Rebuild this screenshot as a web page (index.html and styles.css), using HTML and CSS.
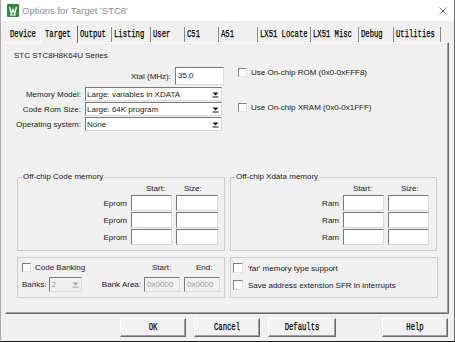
FILE: index.html
```html
<!DOCTYPE html>
<html lang="en">
<head>
    <meta charset="UTF-8">
    <title>Options for Target 'STC8'</title>
    <link rel="stylesheet" href="styles.css">
</head>
<body>
    <div class="window">
        <div class="titlebar">
            <svg class="app-icon" viewBox="0 0 12 13">
                <rect width="12" height="13" rx="1" fill="#2f8a3a"/>
                <path d="M2.5 3 L4.3 9.5 L6 5.5 L7.7 9.5 L9.5 3" fill="none" stroke="#fff" stroke-width="1.4"/>
                <path d="M3 11 H9" stroke="#fff" stroke-width="1"/>
            </svg>
            <span class="title">Options for Target 'STC8'</span>
            <svg class="close" viewBox="0 0 8 8">
                <path d="M0.5 0.5 L7.5 7.5 M7.5 0.5 L0.5 7.5" stroke="#7a7a7a" stroke-width="1"/>
            </svg>
        </div>

        <div class="tabs">
            <div class="tab first"><span>Device</span></div>
            <div class="tab active"><span>Target</span></div>
            <div class="tab"><span>Output</span></div>
            <div class="tab"><span>Listing</span></div>
            <div class="tab"><span>User</span></div>
            <div class="tab"><span>C51</span></div>
            <div class="tab"><span>A51</span></div>
            <div class="tab"><span>LX51 Locate</span></div>
            <div class="tab"><span>LX51 Misc</span></div>
            <div class="tab"><span>Debug</span></div>
            <div class="tab"><span>Utilities</span></div>
        </div>

        <div class="panel">
            <div class="series">STC STC8H8K64U Series</div>

            <div class="top">
                <div class="settings">
                    <div class="xtal-row">
                        <span>Xtal (MHz):</span>
                        <div class="edit xtal">35.0</div>
                    </div>
                    <div class="combos">
                        <span class="label">Memory Model:</span>
                        <div class="combo"><span class="combo-text">Large: variables in XDATA</span><span class="drop"><svg viewBox="0 0 7 7"><path d="M0.5 1.5 H6.5 L3.5 4.5 Z" fill="#111"/><path d="M0.5 6 H6.5" stroke="#111"/></svg></span></div>
                        <span class="label">Code Rom Size:</span>
                        <div class="combo"><span class="combo-text">Large: 64K program</span><span class="drop"><svg viewBox="0 0 7 7"><path d="M0.5 1.5 H6.5 L3.5 4.5 Z" fill="#111"/><path d="M0.5 6 H6.5" stroke="#111"/></svg></span></div>
                        <span class="label">Operating system:</span>
                        <div class="combo"><span class="combo-text">None</span><span class="drop"><svg viewBox="0 0 7 7"><path d="M0.5 1.5 H6.5 L3.5 4.5 Z" fill="#111"/><path d="M0.5 6 H6.5" stroke="#111"/></svg></span></div>
                    </div>
                </div>
                <div class="onchip">
                    <div class="check"><span class="box"></span>Use On-chip ROM (0x0-0xFFF8)</div>
                    <div class="check"><span class="box"></span>Use On-chip XRAM (0x0-0x1FFF)</div>
                </div>
            </div>

            <div class="groups">
                <div class="group code">
                    <div class="group-title">Off-chip Code memory</div>
                    <div class="mem">
                        <span></span>
                        <span class="head code-start">Start:</span>
                        <span class="head code-size">Size:</span>
                        <span class="label">Eprom</span><div class="edit"></div><div class="edit"></div>
                        <span class="label">Eprom</span><div class="edit"></div><div class="edit"></div>
                        <span class="label">Eprom</span><div class="edit"></div><div class="edit"></div>
                    </div>
                </div>
                <div class="group xdata">
                    <div class="group-title">Off-chip Xdata memory</div>
                    <div class="mem">
                        <span></span>
                        <span class="head xdata-start">Start:</span>
                        <span class="head xdata-size">Size:</span>
                        <span class="label">Ram</span><div class="edit"></div><div class="edit"></div>
                        <span class="label">Ram</span><div class="edit"></div><div class="edit"></div>
                        <span class="label">Ram</span><div class="edit"></div><div class="edit"></div>
                    </div>
                </div>
            </div>

            <div class="groups lower">
                <div class="group banking">
                    <div class="check span2"><span class="box"></span>Code Banking</div>
                    <span class="bank-start">Start:</span>
                    <span class="bank-end">End:</span>
                    <div class="banks">
                        <span>Banks:</span>
                        <div class="combo disabled small"><span class="combo-text">2</span><span class="drop"><svg viewBox="0 0 7 7"><path d="M0.5 1.5 H6.5 L3.5 4.5 Z" fill="#a0a0a0"/><path d="M0.5 6 H6.5" stroke="#a0a0a0"/></svg></span></div>
                    </div>
                    <span class="bank-area">Bank Area:</span>
                    <div class="edit disabled">0x0000</div>
                    <div class="edit disabled">0x0000</div>
                </div>
                <div class="group far">
                    <div class="check"><span class="box"></span>'far' memory type support</div>
                    <div class="check"><span class="box"></span>Save address extension SFR in interrupts</div>
                </div>
            </div>
        </div>

        <div class="buttons">
            <button class="btn"><span>OK</span></button>
            <button class="btn"><span>Cancel</span></button>
            <button class="btn wide"><span>Defaults</span></button>
            <button class="btn help"><span>Help</span></button>
        </div>
    </div>
</body>
</html>
```

FILE: styles.css
```css
* {
    box-sizing: border-box;
}

body {
    margin: 0;
    background: #ffffff;
    font-family: "Liberation Sans", Arial, sans-serif;
    font-size: 8px;
    color: #1a1a1a;
}

.window {
    width: 455px;
    height: 342px;
    background: #f0f0f0;
    border-left: 1px solid #a9a9a9;
    border-right: 1px solid #6b6b6b;
    border-bottom: 1px solid #1b1b1b;
    display: flex;
    flex-direction: column;
}

/* title bar */
.titlebar {
    height: 21px;
    flex: none;
    background: #ffffff;
    display: flex;
    align-items: center;
    gap: 3px;
    padding: 0 7px 0 6px;
}

.app-icon {
    width: 12px;
    height: 13px;
}

.title {
    flex: 1;
    font-size: 9.5px;
    color: #8c8c8c;
}

.close {
    width: 8px;
    height: 8px;
}

/* tabs */
.tabs {
    height: 21px;
    flex: none;
    display: grid;
    grid-template-columns: 35px 38px 34px 39px 34px 34px 39px 53px 48px 35px 47px;
    align-items: end;
    padding-left: 4px;
}

.tab {
    height: 15px;
    border-right: 1px solid #8a8a8a;
    padding-left: 2px;
    font-family: "Liberation Mono", monospace;
    font-size: 10px;
    line-height: 15px;
    color: #000000;
    white-space: nowrap;
}

.tab span,
.btn span {
    display: inline-block;
    transform: scaleX(0.72);
    transform-origin: 0 50%;
    -webkit-text-stroke: 0.25px #000;
}

.tab.first {
    border-right: none;
    padding-left: 5px;
}

.tab.active {
    height: 18px;
    margin-bottom: -1px;
    background: #f0f0f0;
    border-top: 1px solid #ffffff;
    border-left: 1px solid #ffffff;
    border-right: 1px solid #6b6b6b;
    padding-left: 4px;
    line-height: 17px;
    position: relative;
    z-index: 1;
}

/* tab page */
.panel {
    width: 444px;
    height: 272px;
    flex: none;
    margin-left: 4px;
    border: 1px solid;
    border-color: #ffffff #6b6b6b #6b6b6b #ffffff;
    box-shadow: inset -1px -1px #a0a0a0;
    padding: 8px 0 0 8px;
}

.series {
    line-height: 10px;
}

.top {
    display: flex;
    gap: 14px;
    margin-top: 6px;
}

.settings {
    width: 210px;
}

.xtal-row {
    height: 18px;
    display: flex;
    justify-content: flex-end;
    align-items: center;
    gap: 4px;
}

.edit {
    background: #ffffff;
    border: 1px solid;
    border-color: #7a7a7a #dadada #dadada #7a7a7a;
    padding-left: 2px;
    white-space: nowrap;
}

.xtal {
    width: 49px;
    height: 18px;
    line-height: 16px;
}

.combos {
    display: grid;
    grid-template-columns: 67px 137px;
    grid-auto-rows: 14px;
    column-gap: 4px;
    row-gap: 1px;
    align-items: center;
    margin-top: 2px;
}

.label {
    text-align: right;
    white-space: nowrap;
}

.combo {
    height: 14px;
    display: flex;
    align-items: center;
    background: #ffffff;
    border: 1px solid;
    border-color: #7a7a7a #dadada #dadada #7a7a7a;
    padding-left: 1px;
}

.combo-text {
    flex: 1;
    white-space: nowrap;
    overflow: hidden;
}

.drop {
    width: 11px;
    height: 12px;
    display: flex;
    align-items: center;
    justify-content: center;
}

.drop svg {
    width: 7px;
    height: 7px;
}

.combo.disabled {
    background: #f0f0f0;
    color: #9a9a9a;
}

.onchip {
    display: flex;
    flex-direction: column;
    gap: 25px;
}

.check {
    height: 10px;
    display: flex;
    align-items: center;
    gap: 4px;
    white-space: nowrap;
}

.box {
    width: 9px;
    height: 9px;
    flex: none;
    background: #ffffff;
    border: 1px solid;
    border-color: #808080 #e2e2e2 #e2e2e2 #808080;
}

/* group boxes */
.groups {
    display: flex;
    gap: 5px;
    margin: 46px 0 0 3px;
}

.groups.lower {
    margin-top: 6px;
}

.group {
    border: 1px solid #cdcdcd;
}

.group.code {
    width: 208px;
    padding-bottom: 5px;
}

.group.xdata {
    width: 207px;
    padding-bottom: 5px;
}

.group-title {
    width: fit-content;
    margin: -6px 0 0 4px;
    padding: 0 1px;
    background: #f0f0f0;
    line-height: 10px;
}

.mem {
    display: grid;
    grid-template-columns: 109px 41px 42px;
    grid-template-rows: 11px 16px 16px 16px;
    column-gap: 4px;
    row-gap: 1px;
    align-items: center;
    margin-top: 1px;
}

.xdata .mem {
    grid-template-columns: 108px 41px 41px;
}

.mem .edit {
    height: 16px;
}

.code-start { padding-left: 15px; }
.code-size { padding-left: 8px; }
.xdata-start { padding-left: 10px; }
.xdata-size { padding-left: 13px; }

.banking {
    width: 208px;
    display: grid;
    grid-template-columns: 78px 44px 40px 36px;
    grid-template-rows: 10px 15px;
    row-gap: 5px;
    align-items: center;
    padding: 4px 0 5px 4px;
}

.span2 {
    grid-column: 1 / 3;
}

.bank-start { padding-left: 8px; }
.bank-end { padding-left: 12px; }

.banks {
    display: flex;
    align-items: center;
    gap: 3px;
}

.combo.small {
    width: 33px;
    height: 15px;
}

.bank-area {
    text-align: right;
    padding-right: 3px;
    white-space: nowrap;
}

.edit.disabled {
    width: 36px;
    height: 15px;
    line-height: 13px;
    background: #f0f0f0;
    color: #9a9a9a;
}

.far {
    width: 208px;
    display: flex;
    flex-direction: column;
    gap: 7px;
    padding: 5px 0 0 2px;
}

.far .box {
    width: 10px;
    height: 10px;
}

.far .check {
    gap: 5px;
}

/* dialog buttons */
.buttons {
    height: 19px;
    flex: none;
    display: flex;
    gap: 8px;
    margin-top: 4px;
    padding: 0 6px 0 119px;
}

.btn {
    width: 66px;
    height: 19px;
    padding: 0;
    background: #f2f2f2;
    border: 1px solid;
    border-color: #ffffff #696969 #696969 #ffffff;
    box-shadow: inset -1px -1px #a0a0a0;
    font-family: "Liberation Mono", monospace;
    font-size: 10px;
    color: #000000;
    text-align: center;
}

.btn span {
    transform-origin: 50% 50%;
}

.btn.wide {
    width: 68px;
}

.btn.help {
    margin-left: auto;
}
```
